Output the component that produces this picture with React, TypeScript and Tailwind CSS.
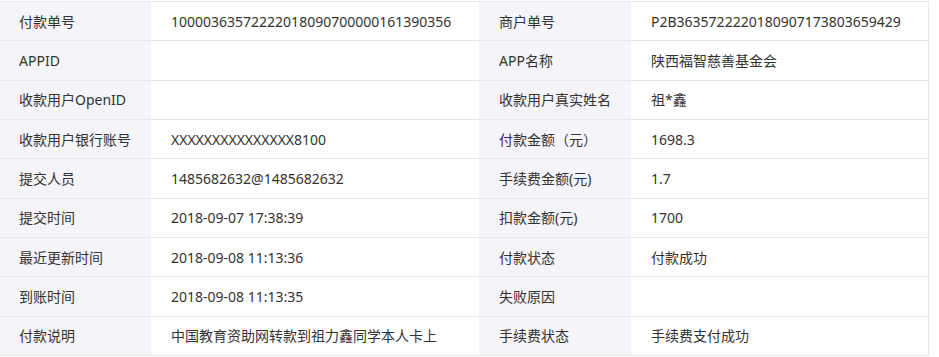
const rows: [string, string, string, string][] = [
  ['付款单号', '10000363572222018090700000161390356', '商户单号', 'P2B36357222201809071738036594​29'],
  ['APPID', '', 'APP名称', '陕西福智慈善基金会'],
  ['收款用户OpenID', '', '收款用户真实姓名', '祖*鑫'],
  ['收款用户银行账号', 'XXXXXXXXXXXXXXX8100', '付款金额（元）', '1698.3'],
  ['提交人员', '1485682632@1485682632', '手续费金额(元)', '1.7'],
  ['提交时间', '2018-09-07 17:38:39', '扣款金额(元)', '1700'],
  ['最近更新时间', '2018-09-08 11:13:36', '付款状态', '付款成功'],
  ['到账时间', '2018-09-08 11:13:35', '失败原因', ''],
  ['付款说明', '中国教育资助网转款到祖力鑫同学本人卡上', '手续费状态', '手续费支付成功'],
];

export default function App() {
  return (
    <div className="w-[939px] h-[357px] bg-white pt-px text-[14px] text-[#333] font-['Noto_Sans','Noto_Sans_CJK_SC',sans-serif]">
      <div className="w-[929px] border-t border-r border-[#e6e6eb]">
        {rows.map((r, i) => (
          <div key={i} className="flex h-[39.33px] border-b border-[#e6e6eb]">
            <div className="w-[151px] bg-[#f4f4f9] pl-[19px] flex items-center">{r[0]}</div>
            <div className="w-[328px] pl-[20px] flex items-center">{r[1].replace('\u200b', '')}</div>
            <div className="w-[152px] bg-[#f4f4f9] pl-[20px] flex items-center">{r[2]}</div>
            <div className="flex-1 pl-[20px] flex items-center">{r[3].replace('\u200b', '')}</div>
          </div>
        ))}
      </div>
    </div>
  );
}
